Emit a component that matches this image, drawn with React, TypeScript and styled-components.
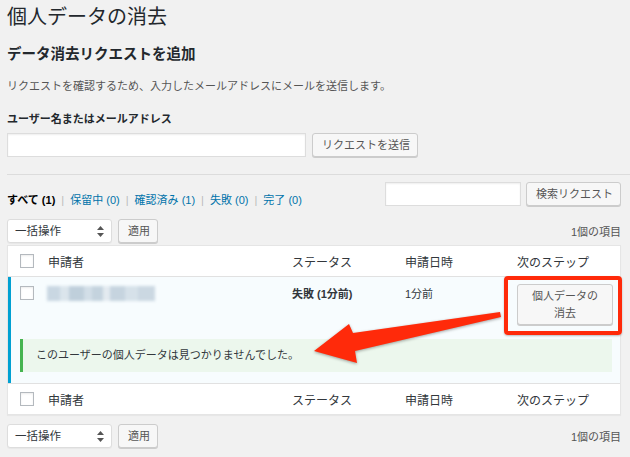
import React from "react";
import styled, { createGlobalStyle } from "styled-components";

const GlobalStyle = createGlobalStyle`
  html, body {
    margin: 0;
    padding: 0;
    background: #f1f1f1;
  }
  body {
    font-family: "Liberation Sans", "Noto Sans CJK JP", sans-serif;
    color: #444;
    font-size: 11px;
  }
`;

const Page = styled.div`
  position: relative;
  padding: 0 9px 10px 7px;
  width: 630px;
  box-sizing: border-box;
`;

const Title = styled.h1`
  margin: 0;
  padding-top: 3px;
  font-size: 20px;
  line-height: 28px;
  font-weight: 400;
  color: #23282d;
`;

const SectionTitle = styled.h2`
  margin: 13px 0 0;
  font-size: 14.5px;
  line-height: 20px;
  font-weight: 700;
  color: #23282d;
`;

const Desc = styled.p`
  margin: 14px 0 0;
  font-size: 11px;
  line-height: 16px;
  color: #555;
`;

const Label = styled.div`
  margin-top: 17px;
  font-size: 11px;
  line-height: 16px;
  font-weight: 700;
  color: #23282d;
`;

const Row = styled.div<{ $top?: number; $gap?: number }>`
  display: flex;
  align-items: center;
  gap: ${(p) => p.$gap ?? 6}px;
  margin-top: ${(p) => p.$top ?? 0}px;
`;

const TextInput = styled.div<{ $w: number }>`
  width: ${(p) => p.$w}px;
  height: 24px;
  box-sizing: border-box;
  background: #fff;
  border: 1px solid #ddd;
  box-shadow: inset 0 1px 2px rgba(0, 0, 0, 0.07);
`;

const Button = styled.button<{ $w?: number }>`
  box-sizing: border-box;
  height: 24px;
  ${(p) => (p.$w ? `width: ${p.$w}px;` : "")}
  padding: 0 9px;
  background: #f7f7f7;
  border: 1px solid #ccc;
  border-radius: 3px;
  box-shadow: 0 1px 0 #ccc;
  color: #555;
  font-family: inherit;
  font-size: 11px;
  line-height: 20px;
  white-space: nowrap;
`;

const Divider = styled.hr`
  margin: 17px -9px 0 0;
  border: 0;
  border-top: 1px solid #dcdcdc;
`;

const FilterBar = styled.div`
  display: flex;
  justify-content: space-between;
  align-items: flex-start;
  height: 24px;
  margin-top: 7px;
`;

const Filters = styled.ul`
  display: flex;
  margin: 10px 0 0;
  padding: 0;
  list-style: none;
  font-size: 11px;
  line-height: 16px;
`;

const FilterItem = styled.li<{ $current?: boolean }>`
  color: ${(p) => (p.$current ? "#000" : "#0073aa")};
  font-weight: ${(p) => (p.$current ? 700 : 400)};
  &:not(:first-child)::before {
    content: "|";
    color: #bbb;
    font-weight: 400;
    margin: 0 6px;
  }
`;

const TableNav = styled.div<{ $top: number }>`
  display: flex;
  align-items: center;
  justify-content: space-between;
  margin-top: ${(p) => p.$top}px;
  height: 24px;
`;

const Select = styled.div`
  position: relative;
  box-sizing: border-box;
  width: 105px;
  height: 24px;
  padding: 0 7px;
  background: #fff;
  border: 1px solid #ddd;
  border-radius: 3px;
  box-shadow: 0 1px 1px rgba(0, 0, 0, 0.04);
  color: #32373c;
  font-size: 11.5px;
  line-height: 22px;
  svg {
    position: absolute;
    right: 7px;
    top: 6px;
  }
`;

const Count = styled.span`
  font-size: 11px;
  color: #555;
`;

const Table = styled.div`
  margin-top: 2px;
  background: #fff;
  border: 1px solid #e5e5e5;
  box-shadow: 0 1px 1px rgba(0, 0, 0, 0.04);
`;

const Cols = styled.div<{ $h: number; $align?: string }>`
  display: grid;
  grid-template-columns: 40px 244px 113px 112px 103px;
  align-items: ${(p) => p.$align ?? "center"};
  height: ${(p) => p.$h}px;
`;

const HeadRow = styled(Cols)<{ $bottom?: boolean }>`
  font-size: 12px;
  color: #32373c;
  ${(p) => (p.$bottom ? "border-top: 1px solid #e1e1e1;" : "border-bottom: 1px solid #e1e1e1;")}
`;

const Check = styled.span`
  display: block;
  width: 12px;
  height: 12px;
  margin-left: 12px;
  border: 1px solid #b4b9be;
  background: #fff;
  box-shadow: inset 0 1px 2px rgba(0, 0, 0, 0.08);
`;

const ItemRow = styled.div`
  background: #f7fcfe;
  box-shadow: inset 3px 0 0 #00a0d2;
  padding-bottom: 11px;
`;

const Cell = styled.div<{ $bold?: boolean }>`
  padding-top: 9px;
  font-size: 11px;
  line-height: 16px;
  font-weight: ${(p) => (p.$bold ? 700 : 400)};
  color: #32373c;
`;

const CheckCell = styled.div`
  padding-top: 9px;
`;

const Blurred = styled.div`
  margin-top: 9px;
  margin-left: -1px;
  width: 108px;
  height: 15px;
  background: linear-gradient(
    90deg,
    #c9d7e2 0 12%,
    #dbe5ec 12% 20%,
    #bfcfdb 20% 34%,
    #d2dee7 34% 42%,
    #c4d3de 42% 52%,
    #e3eaf0 52% 58%,
    #c6d4df 58% 72%,
    #d6e1e9 72% 84%,
    #cbd8e2 84% 100%
  );
  filter: blur(1.5px);
`;

const StepButton = styled(Button)`
  height: 41px;
  width: 96px;
  margin-top: 7px;
  padding: 3px 4px;
  line-height: 17px;
  white-space: normal;
  text-align: center;
`;

const Notice = styled.div`
  margin: 0 8px 0 12px;
  height: 33px;
  box-sizing: border-box;
  padding-left: 13px;
  background: #ecf7ed;
  border-left: 3px solid #46b450;
  font-size: 11px;
  line-height: 33px;
  color: #32373c;
`;

const Highlight = styled.div`
  position: absolute;
  left: 504px;
  top: 276px;
  width: 118px;
  height: 59px;
  box-sizing: border-box;
  border: 4px solid #ff2a0a;
  border-radius: 4px;
  box-shadow: 0 1px 2px rgba(0, 0, 0, 0.25);
`;

const Arrow = styled.svg`
  position: absolute;
  left: 0;
  top: 0;
  filter: drop-shadow(0 1px 1.5px rgba(0, 0, 0, 0.35));
`;

const SelectArrows = () => (
  <svg width="7" height="11" viewBox="0 0 7 11">
    <path d="M3.5 0 L7 4 H0 Z M3.5 11 L7 7 H0 Z" fill="#555" />
  </svg>
);

const BulkActions = ({ top }: { top: number }) => (
  <TableNav $top={top}>
    <Row>
      <Select>
        一括操作
        <SelectArrows />
      </Select>
      <Button $w={40}>適用</Button>
    </Row>
    <Count>1個の項目</Count>
  </TableNav>
);

const Headings = ({ bottom }: { bottom?: boolean }) => (
  <HeadRow $h={30} $bottom={bottom}>
    <Check />
    <span>申請者</span>
    <span>ステータス</span>
    <span>申請日時</span>
    <span>次のステップ</span>
  </HeadRow>
);

const filters = [
  { label: "すべて", n: 1, current: true },
  { label: "保留中", n: 0 },
  { label: "確認済み", n: 1 },
  { label: "失敗", n: 0 },
  { label: "完了", n: 0 },
];

export default function App() {
  return (
    <>
      <GlobalStyle />
      <Page>
        <Title>個人データの消去</Title>
        <SectionTitle>データ消去リクエストを追加</SectionTitle>
        <Desc>リクエストを確認するため、入力したメールアドレスにメールを送信します。</Desc>
        <Label>ユーザー名またはメールアドレス</Label>
        <Row $top={6}>
          <TextInput $w={299} />
          <Button $w={106}>リクエストを送信</Button>
        </Row>
        <Divider />
        <FilterBar>
          <Filters>
            {filters.map((f) => (
              <FilterItem key={f.label} $current={f.current}>
                {f.label} ({f.n})
              </FilterItem>
            ))}
          </Filters>
          <Row $gap={5}>
            <TextInput $w={136} />
            <Button $w={95}>検索リクエスト</Button>
          </Row>
        </FilterBar>
        <BulkActions top={13} />
        <Table>
          <Headings />
          <ItemRow>
            <Cols $h={62} $align="start">
              <CheckCell>
                <Check />
              </CheckCell>
              <Blurred />
              <Cell $bold>失敗 (1分前)</Cell>
              <Cell>1分前</Cell>
              <div>
                <StepButton>
                  個人データの
                  <br />
                  消去
                </StepButton>
              </div>
            </Cols>
            <Notice>このユーザーの個人データは見つかりませんでした。</Notice>
          </ItemRow>
          <Headings bottom />
        </Table>
        <BulkActions top={9} />
        <Highlight />
        <Arrow width="630" height="457" viewBox="0 0 630 457">
          <path
            d="M314 351 L349 324 L353 333 L500 312 L501 317 L355 351 L357 363 Z"
            fill="#ff2a0a"
          />
        </Arrow>
      </Page>
    </>
  );
}
